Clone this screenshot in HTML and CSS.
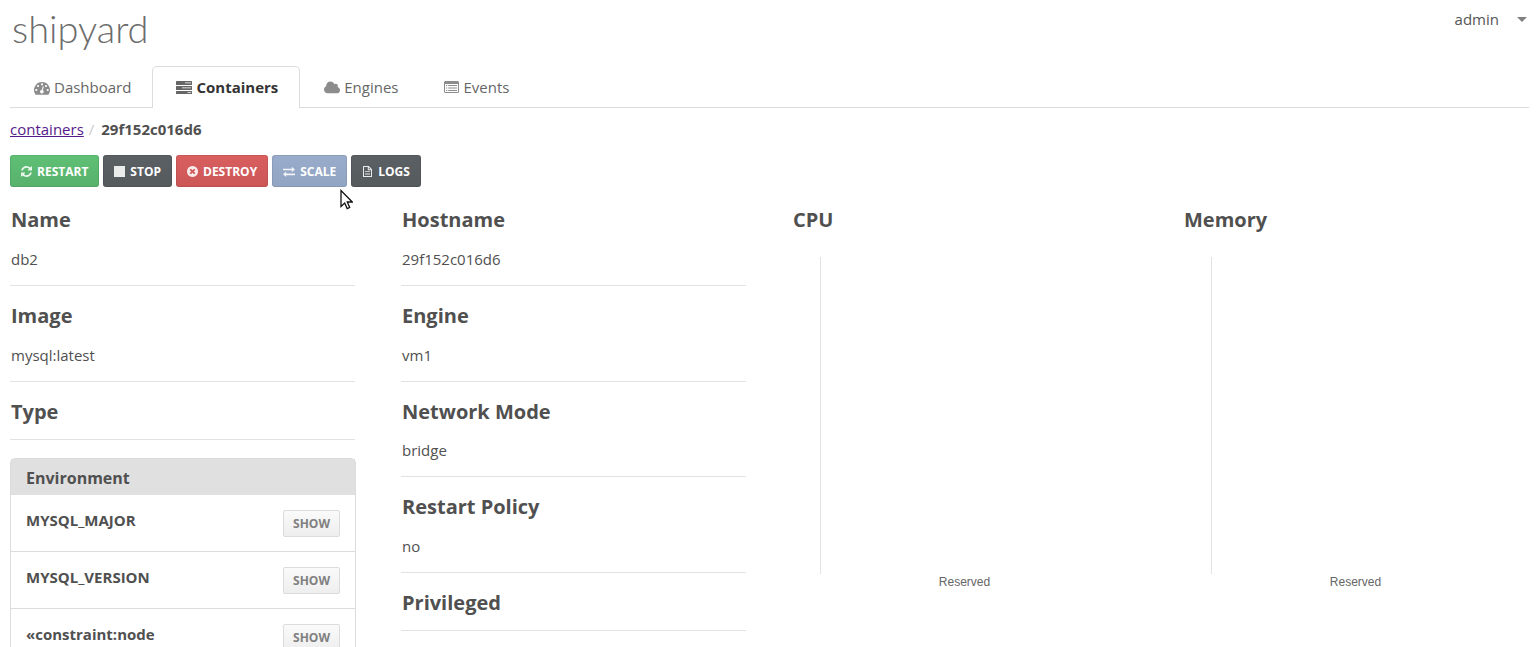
FILE: index.html
```html
<!DOCTYPE html>
<html lang="en">
<head>
<meta charset="utf-8">
<title>shipyard</title>
<link rel="stylesheet" href="styles.css">
</head>
<body>
<header class="topbar">
  <a class="logo" href="#">shipyard</a>
  <button class="account" type="button">admin <span class="caret"></span></button>
</header>

<nav class="tabs">
  <a class="tab" href="#">
    <svg class="icon" viewBox="0 0 16 16"><path fill-rule="evenodd" d="M8 2a8 8 0 0 1 6.700 12.300q-.2.500-.8.500H2.100q-.6 0-.8-.5A8 8 0 0 1 8 2zM2.300 8.900a1.100 1.100 0 1 0 0 2.200a1.100 1.100 0 1 0 0-2.200zM4 4.900a1.100 1.100 0 1 0 0 2.200a1.100 1.100 0 1 0 0-2.200zM8 3.200a1.100 1.100 0 1 0 0 2.200a1.100 1.100 0 1 0 0-2.200zM12 4.900a1.100 1.100 0 1 0 0 2.200a1.100 1.100 0 1 0 0-2.200zM13.700 8.900a1.100 1.100 0 1 0 0 2.200a1.100 1.100 0 1 0 0-2.200zM8.700 6.600L7.800 10a1.700 1.700 0 1 0 1 .3l.9-3.400q0-.6-.4-.7t-.6.4z"/></svg>
    Dashboard</a>
  <a class="tab active" href="#" aria-current="page">
    <svg class="icon" viewBox="0 0 16 16"><path fill-rule="evenodd" d="M.5 1h15q.5 0 .5.500v3q0 .5-.5.500H.5q-.5 0-.5-.5v-3Q0 1 .5 1zM9 2.500v.8h6v-.8zM.5 6h15q.5 0 .5.500v3q0 .5-.5.500H.5q-.5 0-.5-.5v-3Q0 6 .5 6zM6 7.500v.8h9v-.8zM.5 11h15q.5 0 .5.500v2q0 .5-.5.500H.5q-.5 0-.5-.5v-2q0-.5.500-.5zM11.500 12v.8H15V12z"/></svg>
    Containers</a>
  <a class="tab" href="#">
    <svg class="icon" viewBox="64 176 1920 1440"><path d="M1984 1152q0 159-112.500 271.500t-271.500 112.500h-1088q-185 0-316.500-131.500t-131.500-316.500q0-132 71-241.500t187-163.500q-2-28-2-43 0-212 150-362t362-150q158 0 286.500 88t187.500 230q70-62 166-62 106 0 181 75t75 181q0 75-41 138 129 30 213 134.500t84 239.500z"/></svg>
    Engines</a>
  <a class="tab" href="#">
    <svg class="icon" viewBox="0 0 16 16"><path fill-rule="evenodd" d="M1.500 1h12Q15 1 15 2.500v9q0 1.500-1.500 1.500h-12Q0 13 0 11.500v-9Q0 1 1.500 1zM1 4v7.500q0 .5.500.5h12q.5 0 .5-.5V4zM2 5h1.200v1H2zM4.300 5H13v1H4.300zM2 7.500h1.200v1H2zM4.300 7.500H13v1H4.300zM2 10h1.200v1H2zM4.300 10H13v1H4.300z"/></svg>
    Events</a>
</nav>

<nav class="breadcrumb" aria-label="Breadcrumb">
  <a href="#">containers</a><span class="divider">/</span><strong>29f152c016d6</strong>
</nav>

<div class="actions">
  <button class="btn green" type="button"><svg class="glyph" viewBox="128 128 1536 1536"><path d="M1639 1056q0 5-1 7-64 268-268 434.500t-478 166.500q-146 0-282.500-55t-243.500-157l-129 129q-19 19-45 19t-45-19-19-45v-448q0-26 19-45t45-19h448q26 0 45 19t19 45-19 45l-137 137q71 66 161 102t187 36q134 0 250-65t186-179q11-17 53-117 8-23 30-23h192q13 0 22.500 9.500t9.500 22.500zm25-800v448q0 26-19 45t-45 19h-448q-26 0-45-19t-19-45 19-45l138-138q-148-137-349-137-134 0-250 65t-186 179q-11 17-53 117-8 23-30 23h-199q-13 0-22.500-9.500t-9.500-22.500v-7q65-268 270-434.500t480-166.500q146 0 284 55.500t245 156.500l130-129q19-19 45-19t45 19 19 45z"/></svg>RESTART</button>
  <button class="btn dark" type="button"><svg class="glyph" viewBox="0 0 11 11"><path d="M0 0h11v11H0z"/></svg>STOP</button>
  <button class="btn red" type="button"><svg class="glyph" viewBox="128 128 1536 1536"><path d="M1277 1122q0-26-19-45l-181-181 181-181q19-19 19-45 0-27-19-46l-90-90q-19-19-46-19-26 0-45 19l-181 181-181-181q-19-19-45-19-27 0-46 19l-90 90q-19 19-19 46 0 26 19 45l181 181-181 181q-19 19-19 45 0 27 19 46l90 90q19 19 46 19 26 0 45-19l181-181 181 181q19 19 45 19 27 0 46-19l90-90q19-19 19-46zm387-226q0 209-103 385.500t-279.500 279.500-385.500 103-385.500-103-279.500-279.500-103-385.500 103-385.500 279.500-279.500 385.500-103 385.500 103 279.500 279.500 103 385.500z"/></svg>DESTROY</button>
  <button class="btn blue" type="button"><svg class="glyph wide" viewBox="0 0 12 11"><path d="M0 2.800h8.800V.8L12 3.600 8.800 6.300V4.300H0zM12 9.200H3.200v1.800L0 8.300l3.200-2.700v2H12z"/></svg>SCALE</button>
  <button class="btn dark" type="button"><svg class="glyph" viewBox="0 0 11 11"><path fill-rule="evenodd" d="M1 .5Q1 0 1.500 0H6.800L10 3.200v7.300q0 .5-.5.500h-8q-.5 0-.5-.5zM2 1v9h7V4.200H6.300q-.5 0-.5-.5V1zM6.800 1.400v1.800h1.800zM3 5.200h5v.9H3zM3 7.500h5v.9H3z"/></svg>LOGS</button>
  <svg class="pointer" viewBox="0 0 13 21" aria-hidden="true"><path d="M1 1.500v16l3.700-3.500 2.500 5.600 2.500-1.100-2.400-5.500h5z"/></svg>
</div>

<main class="columns">
  <div class="column">
    <section class="field"><h2>Name</h2><p>db2</p></section>
    <section class="field"><h2>Image</h2><p>mysql:latest</p></section>
    <section class="field empty"><h2>Type</h2></section>
    <section class="panel">
      <h3>Environment</h3>
      <div class="row"><strong>MYSQL_MAJOR</strong><button class="show" type="button">SHOW</button></div>
      <div class="row"><strong>MYSQL_VERSION</strong><button class="show" type="button">SHOW</button></div>
      <div class="row"><strong>«constraint:node</strong><button class="show" type="button">SHOW</button></div>
    </section>
  </div>
  <div class="column">
    <section class="field"><h2>Hostname</h2><p>29f152c016d6</p></section>
    <section class="field"><h2>Engine</h2><p>vm1</p></section>
    <section class="field"><h2>Network Mode</h2><p>bridge</p></section>
    <section class="field"><h2>Restart Policy</h2><p>no</p></section>
    <section class="field empty"><h2>Privileged</h2></section>
  </div>
  <section class="column chart"><h2>CPU</h2><div class="plot"></div><span class="axis-label">Reserved</span></section>
  <section class="column chart"><h2>Memory</h2><div class="plot"></div><span class="axis-label">Reserved</span></section>
</main>
</body>
</html>
```

FILE: styles.css
```css
* { box-sizing: border-box; }

body {
  margin: 0;
  padding: 0 9px 0 10px;
  height: 100vh;
  overflow: hidden;
  background: #fff;
  color: #505050;
  font: 15px/21px "Open Sans", "Noto Sans", sans-serif;
}

h2, h3, p { margin: 0; }
button { font-family: inherit; cursor: pointer; }

.topbar {
  display: flex;
  justify-content: space-between;
  align-items: flex-start;
  height: 66px;
}

.logo {
  padding: 6px 0 0 2px;
  color: #6c6c6c;
  font: 300 38px/44px Lato, sans-serif;
  text-decoration: none;
}

.account {
  display: flex;
  align-items: center;
  gap: 18px;
  padding: 9px 2px 0 0;
  border: 0;
  background: none;
  color: #555;
  font-size: 15px;
  line-height: 21px;
}

.caret {
  border: 5px solid transparent;
  border-top-color: #808080;
  border-bottom: 0;
}

.tabs {
  display: flex;
  height: 42px;
  border-bottom: 1px solid #dcdcdc;
}

.tab {
  display: flex;
  align-items: center;
  gap: 4px;
  height: 42px;
  padding: 0 20px 0 23px;
  border: 1px solid transparent;
  border-bottom: 0;
  color: #666;
  text-decoration: none;
}

.tab.active {
  padding-right: 21px;
  border-color: #dcdcdc;
  border-radius: 5px 5px 0 0;
  background: #fff;
  color: #333;
  font-weight: 700;
}

.icon { width: 16px; height: 16px; fill: currentColor; opacity: .75; }

.breadcrumb { display: flex; padding: 11px 0 15px; }
.breadcrumb a { color: #551a8b; }
.divider { margin: 0 7px 0 5px; color: #ccc; }

.actions { position: relative; display: flex; gap: 4px; }

.btn {
  display: flex;
  align-items: center;
  gap: 5px;
  height: 32px;
  padding: 1px 11px 0;
  border: 0;
  border-radius: 3px;
  box-shadow: inset 0 0 0 1px rgba(0, 0, 0, .08);
  color: #fff;
  font-size: 12px;
  font-weight: 700;
  line-height: 16px;
}

.green { background: linear-gradient(#5fc075, #58b16c); }
.dark { background: linear-gradient(#5b6065, #555a5d); }
.red { background: linear-gradient(#da5f5f, #cb5656); }
.blue { background: linear-gradient(#9aaccb, #91a4c2); }

.glyph { width: 11px; height: 11px; fill: currentColor; opacity: .88; }
.glyph.wide { width: 12px; }

.pointer {
  position: absolute;
  left: 330px;
  top: 34px;
  width: 13px;
  height: 21px;
  fill: #fff;
  stroke: #111;
  stroke-width: 1.3;
}

.columns {
  display: grid;
  grid-template-columns: repeat(4, minmax(0, 1fr));
  gap: 46px;
  padding: 3px 1px 0 0;
}

.field { padding: 17px 0 15px 1px; border-bottom: 1px solid #e2e2e2; }
.field.empty { padding-bottom: 14px; }
.column h2 { font-size: 20px; line-height: 26px; }
.field p { margin-top: 16px; }
.field:nth-child(3) p { margin-top: 15px; }

.panel {
  margin: 18px -1px 0 0;
  border: 1px solid #dcdcdc;
  border-radius: 5px 5px 0 0;
}

.panel h3 {
  padding: 8px 15px 6px;
  background: #e0e0e0;
  font-size: 16px;
  line-height: 22px;
}

.row {
  display: flex;
  justify-content: space-between;
  align-items: flex-start;
  padding: 15px 15px 14px;
  border-bottom: 1px solid #dcdcdc;
}

.show {
  height: 27px;
  padding: 0 9px;
  border: 1px solid #dcdcdc;
  border-radius: 2px;
  background: linear-gradient(#fafafa, #eee);
  color: #808080;
  font-size: 12px;
  font-weight: 700;
}

.chart { padding-top: 17px; }
.chart h2 { padding-left: 1px; }
.plot { height: 317px; margin: 24px 0 0 28px; border-left: 1px solid #e2e2e2; }

.axis-label {
  display: block;
  color: #666;
  font: 12px/16px "Liberation Sans", Arial, sans-serif;
  text-align: center;
}
```
